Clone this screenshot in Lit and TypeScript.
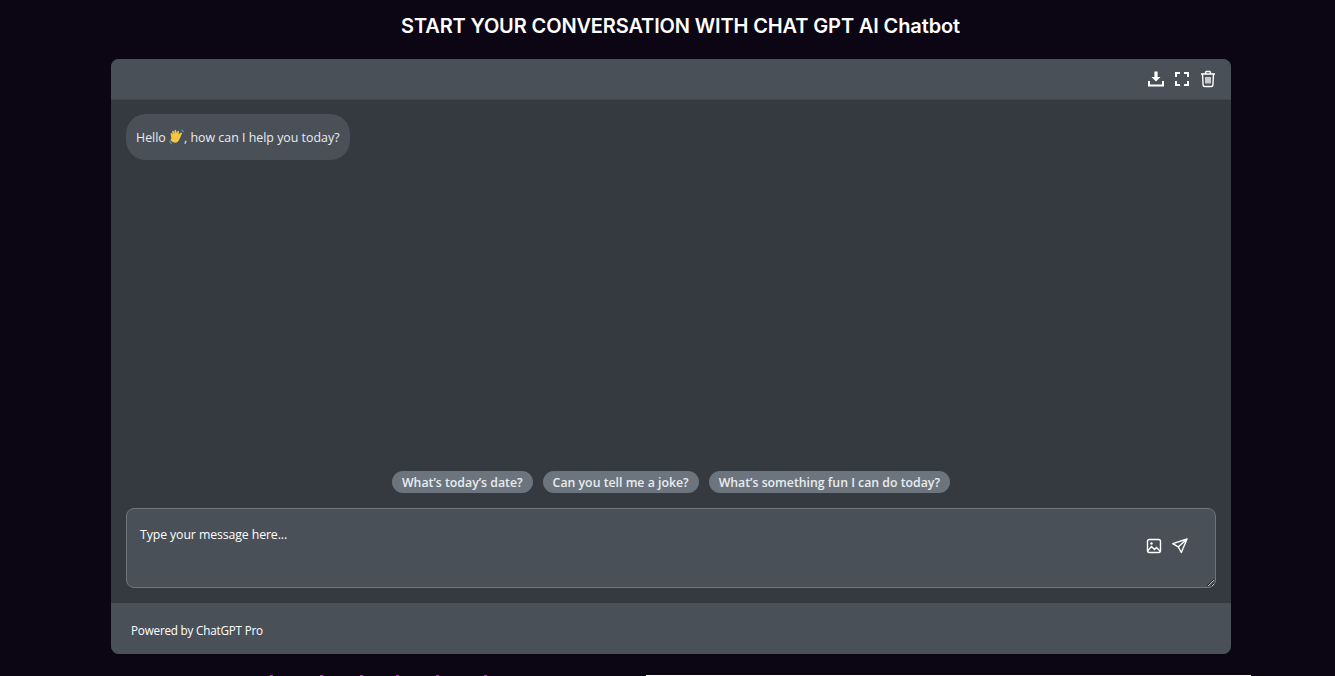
import { css, html, LitElement } from "lit";
import { customElement } from "lit/decorators.js";

const suggestions = [
    "What’s today’s date?",
    "Can you tell me a joke?",
    "What’s something fun I can do today?",
];

// pink marks of the next page section, just peeking in at the bottom edge
const ticks = [270, 320, 360, 396, 436, 484];

@customElement("app-root")
export class AppRoot extends LitElement {
    protected override render() {
        return html`
            <h1 class="title">START YOUR CONVERSATION WITH CHAT GPT AI Chatbot</h1>
            <section class="card">
                <header class="card-head">
                    <button class="icon" aria-label="Download">
                        <svg width="18" height="18" viewBox="0 0 18 18" fill="#fff">
                            <path d="M7.400 1.500h3.200v5.600h2.900L9 11.600 4.500 7.100h2.900z" />
                            <path d="M1 11h2v3.500h12V11h2v5.500H1z" />
                        </svg>
                    </button>
                    <button class="icon" aria-label="Fullscreen">
                        <svg width="18" height="18" viewBox="0 0 18 18" fill="none" stroke="#fff" stroke-width="2">
                            <path d="M6 3H3v3M12 3h3v3M3 12v3h3M15 12v3h-3" stroke-linecap="square" />
                        </svg>
                    </button>
                    <button class="icon" aria-label="Clear">
                        <svg width="18" height="18" viewBox="0 0 18 18" fill="none" stroke="#fff" stroke-width="1.400">
                            <path d="M2 4h14M6.500 4V2.500a1 1 0 0 1 1-1h3a1 1 0 0 1 1 1V4M3.500 4l.6 11.200a1.500 1.500 0 0 0 1.500 1.300h6.800a1.500 1.500 0 0 0 1.500-1.300L14.500 4" />
                            <path d="M7 7v6.500M9 7v6.500M11 7v6.500" />
                        </svg>
                    </button>
                </header>

                <div class="chat">
                    <div class="messages">
                        <div class="bubble">
                            Hello
                            <svg class="wave" width="16" height="16" viewBox="0 0 16 16">
                                <path fill="#f7c63f" d="M2.500 9.800 1.600 5c-.2-1 1.100-1.400 1.500-.4l.7 1.400-.6-3.300C3 1.600 4.500 1.300 4.800 2.400l.8 2.300-.1-3c0-1.100 1.500-1.200 1.700-.1l.6 2.600.6-1.800c.3-1 1.700-.7 1.600.4l-.4 2.700 1.900-1.800c.8-.7 1.800.2 1.300 1.100l-2.200 5.200c-1 2.800-3.200 4.200-5.600 3.600-1.800-.5-3.600-2-3.500-3.800z" />
                                <path fill="none" stroke="#5b9bd5" stroke-width="1.100" d="M.7 11.500c.3 1.400 1 2.600 2 3.500M12.500 1c.9.300 1.600 1 2 2" />
                            </svg>, how can I help you today?
                        </div>
                    </div>
                    <div class="chips">
                        ${suggestions.map((s) => html`<button class="chip">${s}</button>`)}
                    </div>
                    <div class="composer">
                        <textarea placeholder="Type your message here..."></textarea>
                        <div class="composer-actions">
                            <button class="icon" aria-label="Attach image">
                                <svg width="18" height="18" viewBox="0 0 18 18" fill="none" stroke="#fff" stroke-width="1.400">
                                    <rect x="2.500" y="2.500" width="13" height="13" rx="2" />
                                    <circle cx="6.500" cy="6.500" r="1.200" fill="#fff" stroke="none" />
                                    <path d="M2.500 14l4-4.500 3 3 2-2 4 4" />
                                </svg>
                            </button>
                            <button class="icon" aria-label="Send">
                                <svg width="18" height="18" viewBox="0 0 18 18" fill="none" stroke="#fff" stroke-width="1.400" stroke-linejoin="round">
                                    <path d="M16 2 1.800 6.700l5.400 3.200 3.100 5.600zM16 2 7.200 9.900" />
                                </svg>
                            </button>
                        </div>
                    </div>
                </div>

                <footer class="card-foot">Powered by ChatGPT Pro</footer>
            </section>

            <div class="next">
                <div class="next-left">
                    ${ticks.map((x) => html`<i class="tick" style="left:${x}px"></i>`)}
                </div>
                <div class="next-right"></div>
            </div>
        `;
    }

    static styles = css`
        :host {
            display: block;
            height: 676px;
            overflow: hidden;
            background: #0c0514;
            color: #fff;
            font-family: "Open Sans", "Noto Sans", sans-serif;
        }

        .title {
            margin: 0;
            height: 59px;
            padding: 13px 0 0 26px;
            box-sizing: border-box;
            font-family: Inter, "Noto Sans", sans-serif;
            font-size: 20px;
            line-height: 27px;
            font-weight: 600;
            letter-spacing: -0.13px;
            text-align: center;
        }

        .card {
            width: 1120px;
            height: 595px;
            margin-left: 111px;
            display: flex;
            flex-direction: column;
            border-radius: 8px;
            overflow: hidden;
            background: #343a40;
        }

        .card-head {
            height: 41px;
            flex: none;
            box-sizing: border-box;
            display: flex;
            align-items: center;
            justify-content: flex-end;
            gap: 8px;
            padding-right: 14px;
            background: #495057;
            border-bottom: 1px solid #3f454c;
        }

        .icon {
            width: 18px;
            height: 18px;
            padding: 0;
            border: none;
            background: none;
            display: flex;
            cursor: pointer;
        }

        .chat {
            flex: 1;
            min-height: 0;
            display: flex;
            flex-direction: column;
            padding: 14px 15px 15px;
        }

        .messages {
            flex: 1;
        }

        .bubble {
            display: inline-block;
            padding: 0 10px;
            line-height: 47px;
            height: 46px;
            border-radius: 20px;
            background: #495057;
            color: #e9ecef;
            font-size: 12.400px;
        }

        .wave {
            vertical-align: -3px;
            margin-right: -1px;
        }

        .chips {
            display: flex;
            justify-content: center;
            gap: 10px;
            margin-bottom: 15px;
        }

        .chip {
            height: 22px;
            padding: 0 10px;
            border: none;
            border-radius: 11px;
            background: #6c757d;
            color: #e9ecef;
            font-family: inherit;
            font-size: 12.300px;
            font-weight: 600;
            cursor: pointer;
        }

        .composer {
            position: relative;
            display: flex;
        }

        textarea {
            flex: 1;
            height: 80px;
            box-sizing: border-box;
            padding: 17px 13px;
            border: 1px solid #6c757d;
            border-radius: 8px;
            background: #495057;
            color: #fff;
            font-family: inherit;
            font-size: 12.300px;
            letter-spacing: -0.1px;
            line-height: 17px;
            outline: none;
        }

        textarea::placeholder {
            color: #fff;
            opacity: 1;
        }

        .composer-actions {
            position: absolute;
            top: 29px;
            right: 27px;
            display: flex;
            gap: 8px;
        }

        .card-foot {
            height: 51px;
            flex: none;
            box-sizing: border-box;
            padding: 3px 0 0 20px;
            display: flex;
            align-items: center;
            background: #495057;
            font-size: 11.700px;
            letter-spacing: -0.2px;
        }

        .next {
            display: flex;
            margin-top: 21px;
            height: 1px;
        }

        .next-left {
            position: relative;
            width: 646px;
        }

        .tick {
            position: absolute;
            top: 0;
            width: 3px;
            height: 1px;
            background: #d01ad0;
        }

        .next-right {
            width: 605px;
            background: #fff;
        }
    `;
}

declare global {
    interface HTMLElementTagNameMap {
        "app-root": AppRoot;
    }
}
